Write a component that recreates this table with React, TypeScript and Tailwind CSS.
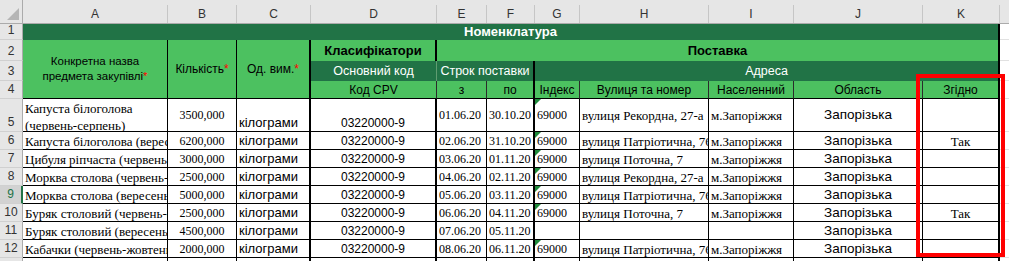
import type React from "react";

const serif = "font-['Liberation_Serif','Times_New_Roman',serif]";
const sans = "font-['Liberation_Sans',Arial,sans-serif]";

const light = "bg-[#4cc160]";
const dark = "bg-[#217346]";

type Row = {
	n: number;
	a: string;
	b: string;
	e: string;
	f: string;
	g: string;
	h: string;
	i: string;
	k: string;
};

const rows: Row[] = [
	{ n: 5, a: "Капуста білоголова (червень-серпень)", b: "3500,000", e: "01.06.20", f: "30.10.20", g: "69000", h: "вулиця Рекордна, 27-а", i: "м.Запоріжжя", k: "" },
	{ n: 6, a: "Капуста білоголова (вересень-грудень)", b: "6200,000", e: "02.06.20", f: "31.10.20", g: "69000", h: "вулиця Патріотична, 76", i: "м.Запоріжжя", k: "Так" },
	{ n: 7, a: "Цибуля ріпчаста (червень-грудень)", b: "3000,000", e: "03.06.20", f: "01.11.20", g: "69000", h: "вулиця Поточна, 7", i: "м.Запоріжжя", k: "" },
	{ n: 8, a: "Морква столова (червень-серпень)", b: "2500,000", e: "04.06.20", f: "02.11.20", g: "69000", h: "вулиця Рекордна, 27-а", i: "м.Запоріжжя", k: "" },
	{ n: 9, a: "Морква столова (вересень-грудень)", b: "5000,000", e: "05.06.20", f: "03.11.20", g: "69000", h: "вулиця Патріотична, 76", i: "м.Запоріжжя", k: "" },
	{ n: 10, a: "Буряк столовий (червень-серпень)", b: "2500,000", e: "06.06.20", f: "04.11.20", g: "69000", h: "вулиця Поточна, 7", i: "м.Запоріжжя", k: "Так" },
	{ n: 11, a: "Буряк столовий (вересень-грудень)", b: "4500,000", e: "07.06.20", f: "05.11.20", g: "", h: "", i: "", k: "" },
	{ n: 12, a: "Кабачки (червень-жовтень)", b: "2000,000", e: "08.06.20", f: "06.11.20", g: "69000", h: "вулиця Патріотична, 76", i: "м.Запоріжжя", k: "" },
];

const ColHead: React.FC<{ label: string }> = ({ label }) => (
	<div className="bg-[#e6e6e6] border-b border-[#ababab]">
		<div className={`mt-[5px] h-[18px] border-r border-[#c6c6c6] flex items-center justify-center text-[12px] text-[#333] ${sans}`}>
			{label}
		</div>
	</div>
);

const RowHead: React.FC<{ n: number; active?: boolean }> = ({ n, active }) => (
	<div
		className={`border-b border-b-[#d0d0d0] flex items-end justify-center pb-px text-[12px] leading-[15px] ${sans} ${
			active
				? "bg-[#d2d2d2] text-[#217346] border-r-2 border-r-[#217346]"
				: "bg-[#e6e6e6] text-[#333] border-r border-r-[#ababab]"
		}`}
	>
		{n}
	</div>
);

const Blank: React.FC = () => <div className="bg-white border-b border-[#e1e1e1]" />;

const Star: React.FC = () => <span className="text-[#ff0000]">*</span>;

const Flag: React.FC = () => (
	<span className="absolute top-0 left-0 w-0 h-0 border-t-[6px] border-t-[#1f8a3b] border-r-[6px] border-r-transparent" />
);

const DataRow: React.FC<{ r: Row }> = ({ r }) => {
	const tall = r.n === 5;
	const v = tall ? "items-center" : "items-end";
	const cell = "border-b border-black px-[2px] flex overflow-hidden whitespace-nowrap";
	return (
		<>
			<RowHead n={r.n} active={r.n === 9} />
			{tall ? (
				<div className={`border-b border-r border-black px-[2px] pt-px overflow-hidden ${serif} text-[13px] leading-[17px]`}>
					{r.a}
				</div>
			) : (
				<div className={`${cell} border-r items-end ${serif} text-[13px] leading-[15px]`}>{r.a}</div>
			)}
			<div className={`${cell} border-r ${v} justify-center ${serif} text-[12px] leading-[15px]`}>{r.b}</div>
			<div className={`${cell} border-r-2 items-end ${sans} text-[13px] leading-[16px]`}>кілограми</div>
			<div className={`${cell} border-r-2 items-end justify-center ${sans} text-[12px] leading-[16px]`}>03220000-9</div>
			<div className={`${cell} border-r ${v} ${serif} text-[12px] leading-[15px]`}>{r.e}</div>
			<div className={`${cell} border-r-2 ${v} ${serif} text-[12px] leading-[15px]`}>{r.f}</div>
			<div className={`${cell} border-r relative ${v} ${serif} text-[12px] leading-[15px]`}>
				{r.g && <Flag />}
				{r.g}
			</div>
			<div className={`${cell} border-r ${v} ${serif} text-[13px] leading-[15px]`}>{r.h}</div>
			<div className={`${cell} border-r ${v} ${serif} text-[13px] leading-[15px]`}>{r.i}</div>
			<div className={`${cell} border-r ${v} justify-center ${sans} text-[13.5px] leading-[16px]`}>Запорізька</div>
			<div className={`${cell} border-r-2 ${v} justify-center ${serif} text-[13px] leading-[15px]`}>{r.k}</div>
			<Blank />
		</>
	);
};

const subHead = `${light} border-r border-b border-r-[#2b2b2b] border-b-black flex items-center justify-center text-[12px] text-black ${sans}`;

export default function App() {
	return (
		<div className="relative w-[1009px] h-[261px] overflow-hidden bg-white">
			<div className="grid grid-cols-[23px_145px_69px_74px_126px_50px_48px_45px_129px_85px_129px_77px_9px] grid-rows-[24px_16px_21px_20px_18px_33px_18px_18px_18px_18px_18px_18px_18px_18px]">
				{/* column letters */}
				<div className="bg-[#e6e6e6] border-r border-b border-[#ababab] flex items-end justify-end p-[3px]">
					<svg width="12" height="12" viewBox="0 0 12 12">
						<polygon points="12,0 12,12 0,12" fill="#b5b5b5" />
					</svg>
				</div>
				{["A", "B", "C", "D", "E", "F", "G", "H", "I", "J", "K"].map((l) => (
					<ColHead key={l} label={l} />
				))}
				<div className="bg-[#e6e6e6] border-b border-[#ababab]" />

				{/* row 1 */}
				<RowHead n={1} />
				<div className={`col-span-11 ${dark} border-r-2 border-black flex items-center justify-center text-white font-bold text-[13px] ${sans}`}>
					Номенклатура
				</div>
				<div className="bg-white border-b border-[#e1e1e1]" />

				{/* row 2 */}
				<RowHead n={2} />
				<div className={`row-span-3 ${light} border-r border-b border-black flex items-center justify-center text-center text-[11.5px] leading-[15px] ${sans}`}>
					<span>
						Конкретна назва
						<br />
						предмета закупівлі
						<Star />
					</span>
				</div>
				<div className={`row-span-3 ${light} border-r border-b border-black flex items-center justify-center text-[12px] ${sans}`}>
					Кількість
					<Star />
				</div>
				<div className={`row-span-3 ${light} border-r-2 border-b border-black flex items-center justify-center text-[12px] ${sans}`}>
					Од. вим.
					<Star />
				</div>
				<div className={`${light} border-r-2 border-black flex items-center justify-center font-bold text-[13px] ${sans}`}>
					Класифікатори
				</div>
				<div className={`col-span-7 ${light} border-r-2 border-black flex items-center justify-center font-bold text-[13px] ${sans}`}>
					Поставка
				</div>
				<Blank />

				{/* row 3 */}
				<RowHead n={3} />
				<div className={`${dark} border-r border-[#5f9c71] flex items-center justify-center text-white text-[12.5px] ${sans}`}>
					Основний код
				</div>
				<div className={`col-span-2 ${dark} border-r-2 border-black flex items-center justify-center text-white text-[12.5px] ${sans}`}>
					Строк поставки
				</div>
				<div className={`col-span-5 ${dark} border-r-2 border-black flex items-center justify-center text-white text-[12.5px] ${sans}`}>
					Адреса
				</div>
				<Blank />

				{/* row 4 */}
				<RowHead n={4} />
				<div className={subHead}>Код CPV</div>
				<div className={subHead}>з</div>
				<div className={`${subHead} border-r-2 border-r-black`}>по</div>
				<div className={subHead}>Індекс</div>
				<div className={subHead}>Вулиця та номер</div>
				<div className={subHead}>Населенний</div>
				<div className={subHead}>Область</div>
				<div className={`${subHead} border-r-2 border-r-black`}>Згідно</div>
				<Blank />

				{rows.map((r) => (
					<DataRow key={r.n} r={r} />
				))}

				{/* row 13, cut by the window */}
				<RowHead n={13} />
				<div className="border-r border-b border-black" />
				<div className="border-r border-b border-black" />
				<div className="border-r-2 border-b border-black" />
				<div className="border-r-2 border-b border-black" />
				<div className="border-r border-b border-black" />
				<div className="border-r-2 border-b border-black" />
				<div className="border-r border-b border-black" />
				<div className="border-r border-b border-black" />
				<div className="border-r border-b border-black" />
				<div className="border-r border-b border-black" />
				<div className="border-r-2 border-b border-black" />
				<Blank />
			</div>

			<div className="absolute left-[916px] top-[74px] w-[89px] h-[183px] border-4 border-[#ff0000]" />
		</div>
	);
}
